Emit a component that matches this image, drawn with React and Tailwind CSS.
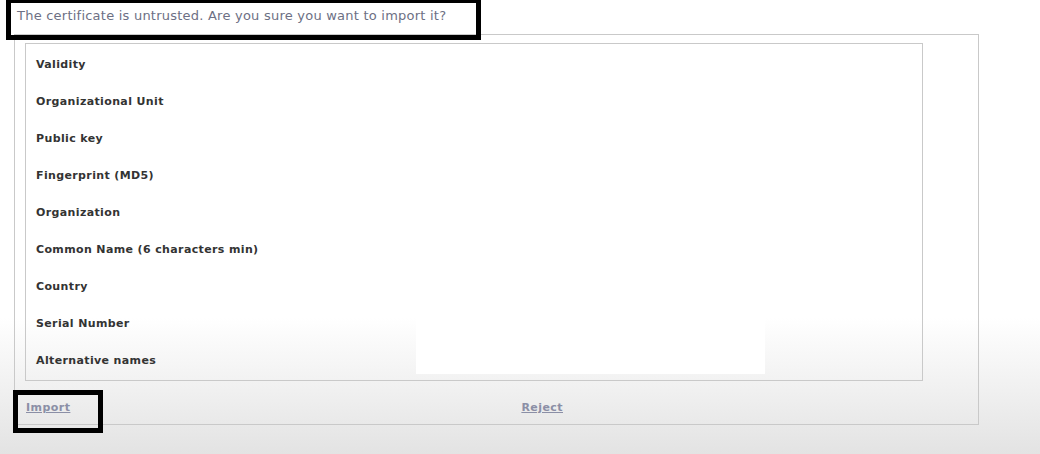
import React from 'react';

const fields = [
  'Validity',
  'Organizational Unit',
  'Public key',
  'Fingerprint (MD5)',
  'Organization',
  'Common Name (6 characters min)',
  'Country',
  'Serial Number',
  'Alternative names',
];

const App = () => {
  return (
    <div
      className="relative w-[1040px] h-[454px] overflow-hidden bg-linear-to-b from-white from-70% to-[#e3e3e3]"
      style={{ fontFamily: '"DejaVu Sans", Verdana, sans-serif' }}
    >
      {/* prompt */}
      <div className="h-[34px] pl-[17px] pt-[7px] text-[13px] leading-[18px] tracking-[0.23px] text-[#6d7084]">
        The certificate is untrusted. Are you sure you want to import it?
      </div>

      {/* certificate panel */}
      <div className="ml-[14px] w-[965px] h-[391px] border border-[#c9c9c9] pt-[8px] pl-[10px]">
        <div className="w-[898px] border border-[#c9c9c9] pt-[3px] pl-[10px]">
          {fields.map((f) => (
            <div key={f} className="h-[37px] flex items-center text-[11px] font-bold tracking-[0.37px] text-[#333]">
              {f}
            </div>
          ))}
        </div>

        <div className="flex items-center mt-[19px] pl-[1px] text-[11px] font-bold tracking-[0.45px] text-[#8b8fa6]">
          <a href="#" className="underline">Import</a>
          <a href="#" className="underline ml-[451px]">Reject</a>
        </div>
      </div>

      {/* white patch over the panel */}
      <div className="absolute left-[416px] top-[300px] w-[349px] h-[74px] bg-white" />

      {/* annotation boxes */}
      <div className="absolute left-[6px] top-0 w-[475px] h-[40px] border-[5px] border-t-[3px] border-black" />
      <div className="absolute left-[13px] top-[390px] w-[90px] h-[43px] border-[5px] border-black" />
    </div>
  );
};

export default App;
